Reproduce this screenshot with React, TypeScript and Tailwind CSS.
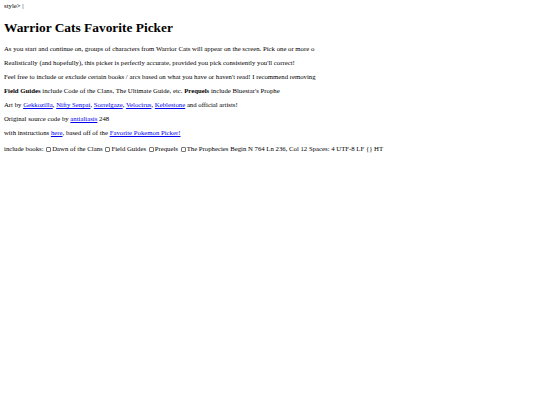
function Box() {
  return (
    <span className="inline-block w-[5px] h-[5px] border border-[#767676] rounded-[1px] bg-white ml-[1px] mr-[1px] align-[-0.5px]" />
  );
}

function A({ children }: { children: React.ReactNode }) {
  return <a className="text-[#0000ee] underline">{children}</a>;
}

export default function App() {
  return (
    <div className="min-h-[405px] w-[540px] bg-white text-black px-[4px] pt-[2px] text-[6.75px] leading-[8px] whitespace-nowrap overflow-hidden font-['Liberation_Serif','Times_New_Roman',serif]">
      <div>style&gt; |</div>
      <h1 className="text-[13.4px] leading-[18px] font-bold mt-[9px] mb-[8px]">Warrior Cats Favorite Picker</h1>
      <div className="flex flex-col gap-[6px]">
        <p>As you start and continue on, groups of characters from Warrior Cats will appear on the screen. Pick one or more o</p>
        <p>Realistically (and hopefully), this picker is perfectly accurate, provided you pick consistently you'll correct!</p>
        <p>Feel free to include or exclude certain books / arcs based on what you have or haven't read! I recommend removing</p>
        <p>
          <b>Field Guides</b> include Code of the Clans, The Ultimate Guide, etc. <b>Prequels</b> include Bluestar's Prophe
        </p>
        <p>
          Art by <A>Gekkozilla</A>, <A>Nifty Senpai</A>, <A>Sorrelgaze</A>, <A>Velocirus</A>, <A>Keblestone</A> and official artists!
        </p>
        <p>
          Original source code by <A>antialiasis</A> 248
        </p>
        <p>
          with instructions <A>here</A>, based off of the <A>Favorite Pokemon Picker!</A>
        </p>
        <p className="mt-[2px]">
          include books: <Box />Dawn of the Clans <Box />Field Guides <Box />Prequels <Box />The Prophecies Begin N 764 Ln 236, Col 12 Spaces: 4 UTF-8 LF {'{}'} HT
        </p>
      </div>
    </div>
  );
}
